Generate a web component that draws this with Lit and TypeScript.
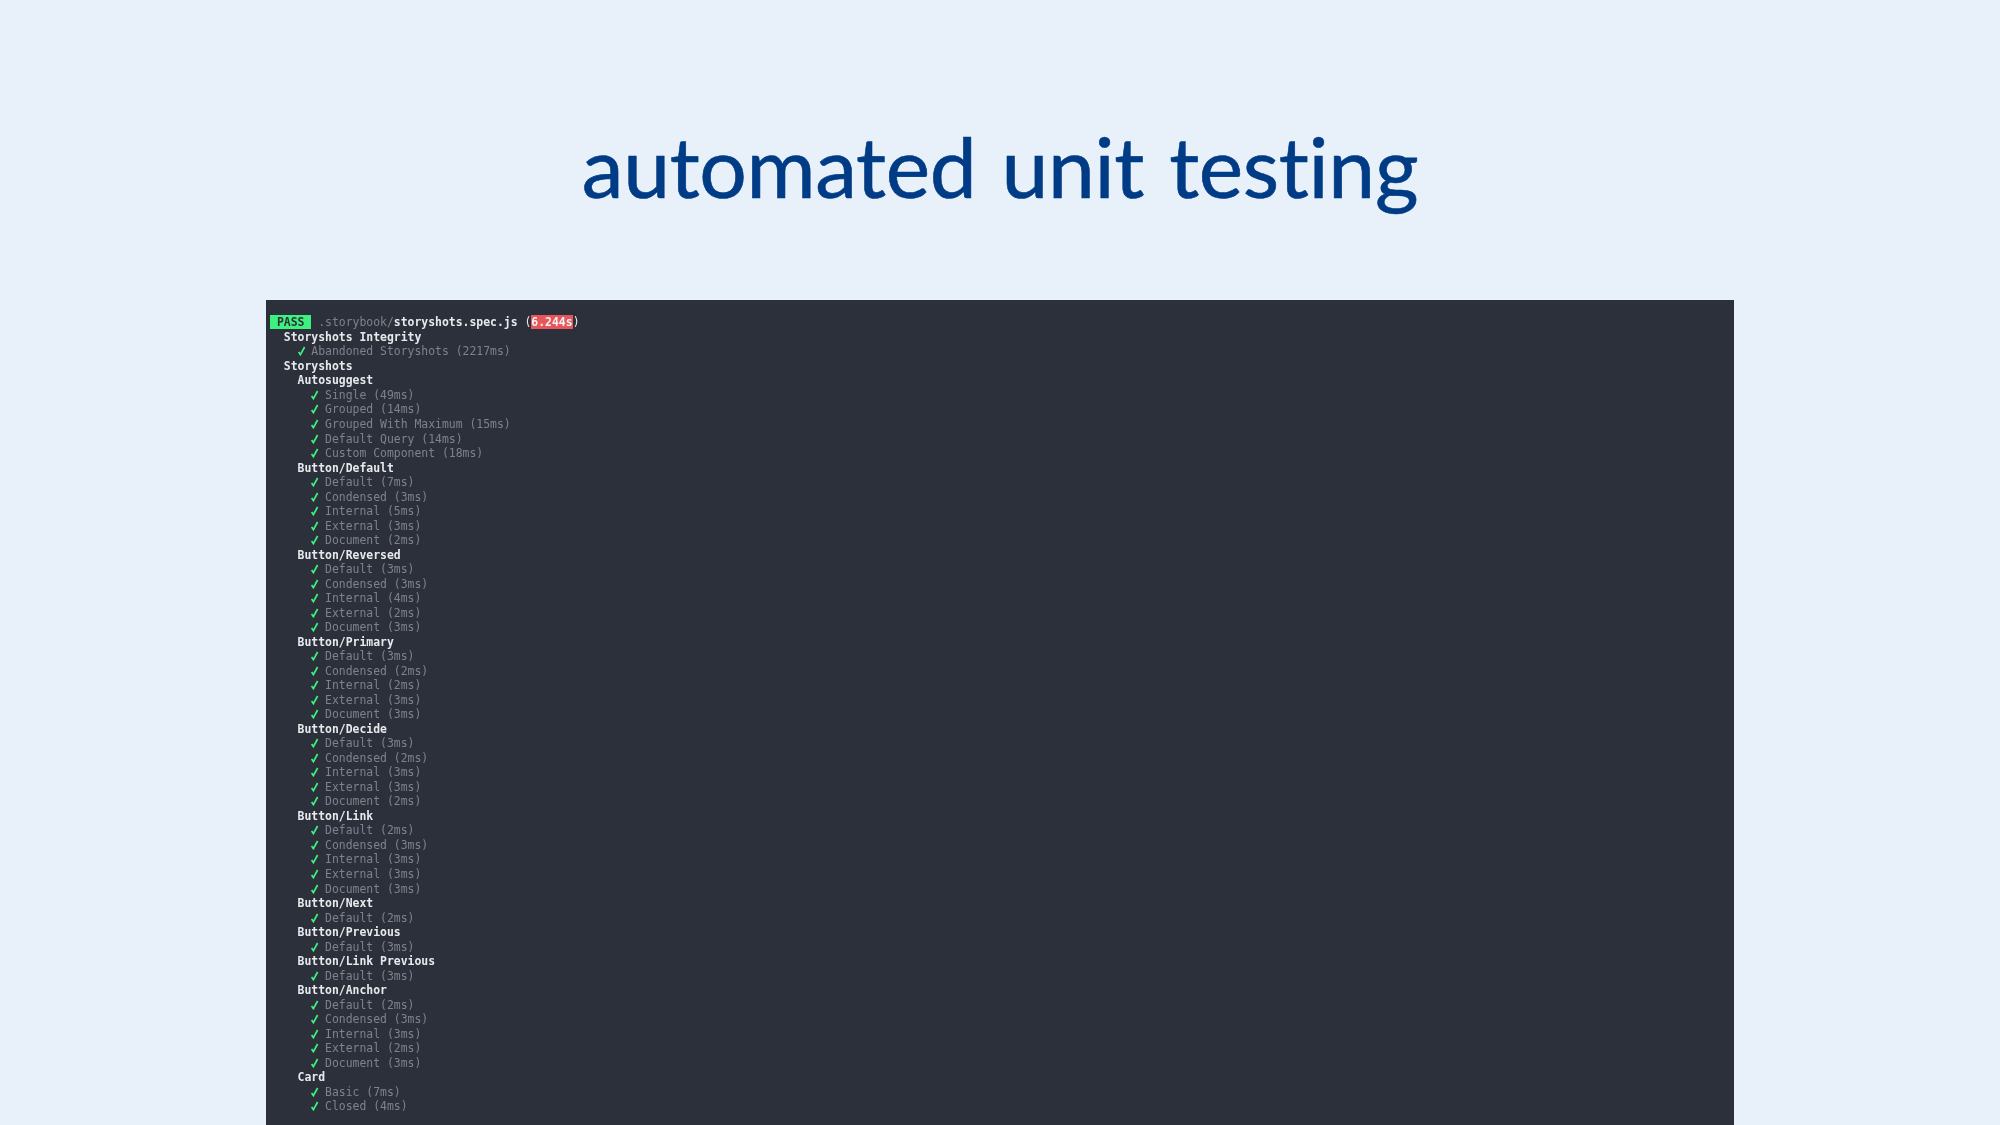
import { LitElement, html, css, svg } from "lit";
import { customElement } from "lit/decorators.js";

type Group = [string, string[]];
const groups: Group[] = [
  ["Autosuggest", ["Single (49ms)", "Grouped (14ms)", "Grouped With Maximum (15ms)", "Default Query (14ms)", "Custom Component (18ms)"]],
  ["Button/Default", ["Default (7ms)", "Condensed (3ms)", "Internal (5ms)", "External (3ms)", "Document (2ms)"]],
  ["Button/Reversed", ["Default (3ms)", "Condensed (3ms)", "Internal (4ms)", "External (2ms)", "Document (3ms)"]],
  ["Button/Primary", ["Default (3ms)", "Condensed (2ms)", "Internal (2ms)", "External (3ms)", "Document (3ms)"]],
  ["Button/Decide", ["Default (3ms)", "Condensed (2ms)", "Internal (3ms)", "External (3ms)", "Document (2ms)"]],
  ["Button/Link", ["Default (2ms)", "Condensed (3ms)", "Internal (3ms)", "External (3ms)", "Document (3ms)"]],
  ["Button/Next", ["Default (2ms)"]],
  ["Button/Previous", ["Default (3ms)"]],
  ["Button/Link Previous", ["Default (3ms)"]],
  ["Button/Anchor", ["Default (2ms)", "Condensed (3ms)", "Internal (3ms)", "External (2ms)", "Document (3ms)"]],
  ["Card", ["Basic (7ms)", "Closed (4ms)"]],
];

@customElement("app-root")
export class AppRoot extends LitElement {
  static styles = css`
    :host {
      display: flex;
      flex-direction: column;
      height: 1125px;
      overflow: hidden;
      background: #e8f1f9;
    }
    h1 {
      flex: none;
      margin: 0;
      height: 300px;
      box-sizing: border-box;
      padding-top: 116px;
      text-align: center;
      font: 400 84px/1.2 Lato, "Open Sans", sans-serif;
      font-variant-ligatures: none;
      word-spacing: 4px;
      letter-spacing: -0.35px;
      -webkit-text-stroke: 0.6px #003b85;
      color: #003b85;
    }
    .term {
      flex: 1;
      margin-left: 266px;
      width: 1468px;
      box-sizing: border-box;
      padding: 15.4px 0 0 4px;
      background: #2c303b;
      font: 400 11.43px/14.52px "DejaVu Sans Mono", monospace;
      color: #7e828b;
      filter: blur(0.45px);
    }
    .line { height: 14.52px; white-space: pre; }
    .b { font-weight: 700; color: #e8e9ec; }
    .w { color: #e8e9ec; }
    .pass { background: #3ef07f; color: #2c303b; font-weight: 700; }
    .time { background: #e8555a; color: #f4f4f4; font-weight: 700; }
    .ok { display: inline-block; width: 1ch; height: 10px; vertical-align: -1px; }
    .ok svg { display: block; overflow: visible; }
  `;

  private test(indent: string, text: string) {
    return html`<div class="line">${indent}<span class="ok"><svg width="7" height="10" viewBox="0 0 7 10">${svg`<path d="M0.6 6 L2.4 8.6 L6.6 1" fill="none" stroke="#3ef07f" stroke-width="1.7"/>`}</svg></span> ${text}</div>`;
  }

  render() {
    return html`
      <h1>automated unit testing</h1>
      <div class="term">
        <div class="line"><span class="pass"> PASS </span> .storybook/<span class="b">storyshots.spec.js</span> <span class="w">(</span><span class="time">6.244s</span><span class="w">)</span></div>
        <div class="line b">  Storyshots Integrity</div>
        ${this.test("    ", "Abandoned Storyshots (2217ms)")}
        <div class="line b">  Storyshots</div>
        ${groups.map(
          ([name, tests]) => html`
            <div class="line b">    ${name}</div>
            ${tests.map((t) => this.test("      ", t))}
          `
        )}
      </div>
    `;
  }
}
